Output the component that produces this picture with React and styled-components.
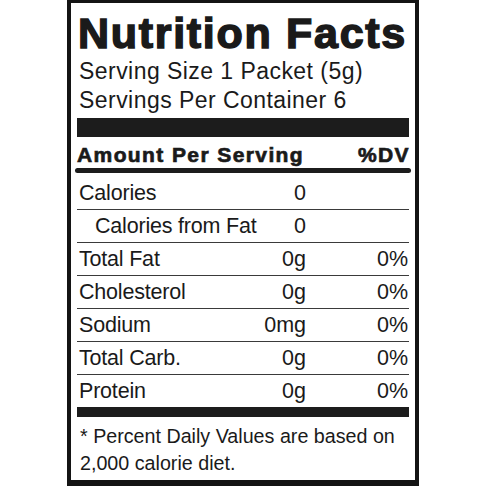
import styled, { createGlobalStyle } from "styled-components";

const GlobalStyle = createGlobalStyle`
  body {
    margin: 0;
    background: #ffffff;
  }
`;

const nutrients = [
  { name: "Calories", amount: "0", dv: "" },
  { name: "Calories from Fat", amount: "0", dv: "", indent: true },
  { name: "Total Fat", amount: "0g", dv: "0%" },
  { name: "Cholesterol", amount: "0g", dv: "0%" },
  { name: "Sodium", amount: "0mg", dv: "0%" },
  { name: "Total Carb.", amount: "0g", dv: "0%" },
  { name: "Protein", amount: "0g", dv: "0%" },
];

const App = () => {
  return (
    <>
      <GlobalStyle />
      <Label>
        <Title>Nutrition Facts</Title>
        <ServingLine>Serving Size 1 Packet (5g)</ServingLine>
        <ServingLine>Servings Per Container 6</ServingLine>
        <ThickBar $height={19} $top={3} />
        <HeaderRow>
          <span>Amount Per Serving</span>
          <span>%DV</span>
        </HeaderRow>
        <Rule />
        {nutrients.map((n, i) => (
          <Row key={n.name} $first={i === 0} $last={i === nutrients.length - 1}>
            <Name $indent={n.indent}>{n.name}</Name>
            <Amount>{n.amount}</Amount>
            <Dv>{n.dv}</Dv>
          </Row>
        ))}
        <ThickBar $height={10} $top={0} />
        <Footnote>
          * Percent Daily Values are based on
          <br />
          2,000 calorie diet.
        </Footnote>
      </Label>
    </>
  );
};

export default App;

const Label = styled.div`
  width: 352px;
  height: 486px;
  margin-left: 67px;
  box-sizing: border-box;
  border: 4px solid #141414;
  border-top-width: 3px;
  border-bottom-width: 6px;
  padding: 6px 6px 0;
  font-family: "Liberation Sans", Arial, sans-serif;
  color: #1a1a1a;
  overflow: hidden;
`;

const Title = styled.div`
  font-size: 43px;
  font-weight: 700;
  line-height: 48px;
  letter-spacing: 1.7px;
  padding-left: 1px;
  -webkit-text-stroke: 1.5px #1a1a1a;
  white-space: nowrap;
`;

const ServingLine = styled.div`
  font-size: 23px;
  line-height: 29px;
  letter-spacing: 0.45px;
  padding-left: 2px;
  white-space: nowrap;
`;

const ThickBar = styled.div`
  height: ${(p) => p.$height}px;
  margin-top: ${(p) => p.$top}px;
  background: #1c1c1c;
`;

const HeaderRow = styled.div`
  display: flex;
  justify-content: space-between;
  padding-top: 4px;
  font-size: 21px;
  font-weight: 700;
  line-height: 27px;
  letter-spacing: 1.4px;
  -webkit-text-stroke: 0.7px #1a1a1a;

  span:last-child {
    margin-right: -1px;
  }
`;

const Rule = styled.div`
  height: 5px;
  margin: 0 -2px;
  border-radius: 3px;
  background: #1c1c1c;
`;

const Row = styled.div`
  display: flex;
  height: 32px;
  padding-top: ${(p) => (p.$first ? 4 : 0)}px;
  font-size: 21.5px;
  line-height: 32px;
  border-bottom: ${(p) => (p.$last ? "none" : "1px solid #3a3a3a")};
`;

const Name = styled.span`
  flex: 1;
  padding-left: ${(p) => (p.$indent ? 18 : 2)}px;
  letter-spacing: -0.2px;
`;

const Amount = styled.span`
  text-align: right;
`;

const Dv = styled.span`
  width: 103px;
  padding-right: 1px;
  box-sizing: border-box;
  text-align: right;
`;

const Footnote = styled.div`
  padding-top: 6px;
  padding-left: 3px;
  font-size: 19.7px;
  line-height: 27px;
  white-space: nowrap;
`;
